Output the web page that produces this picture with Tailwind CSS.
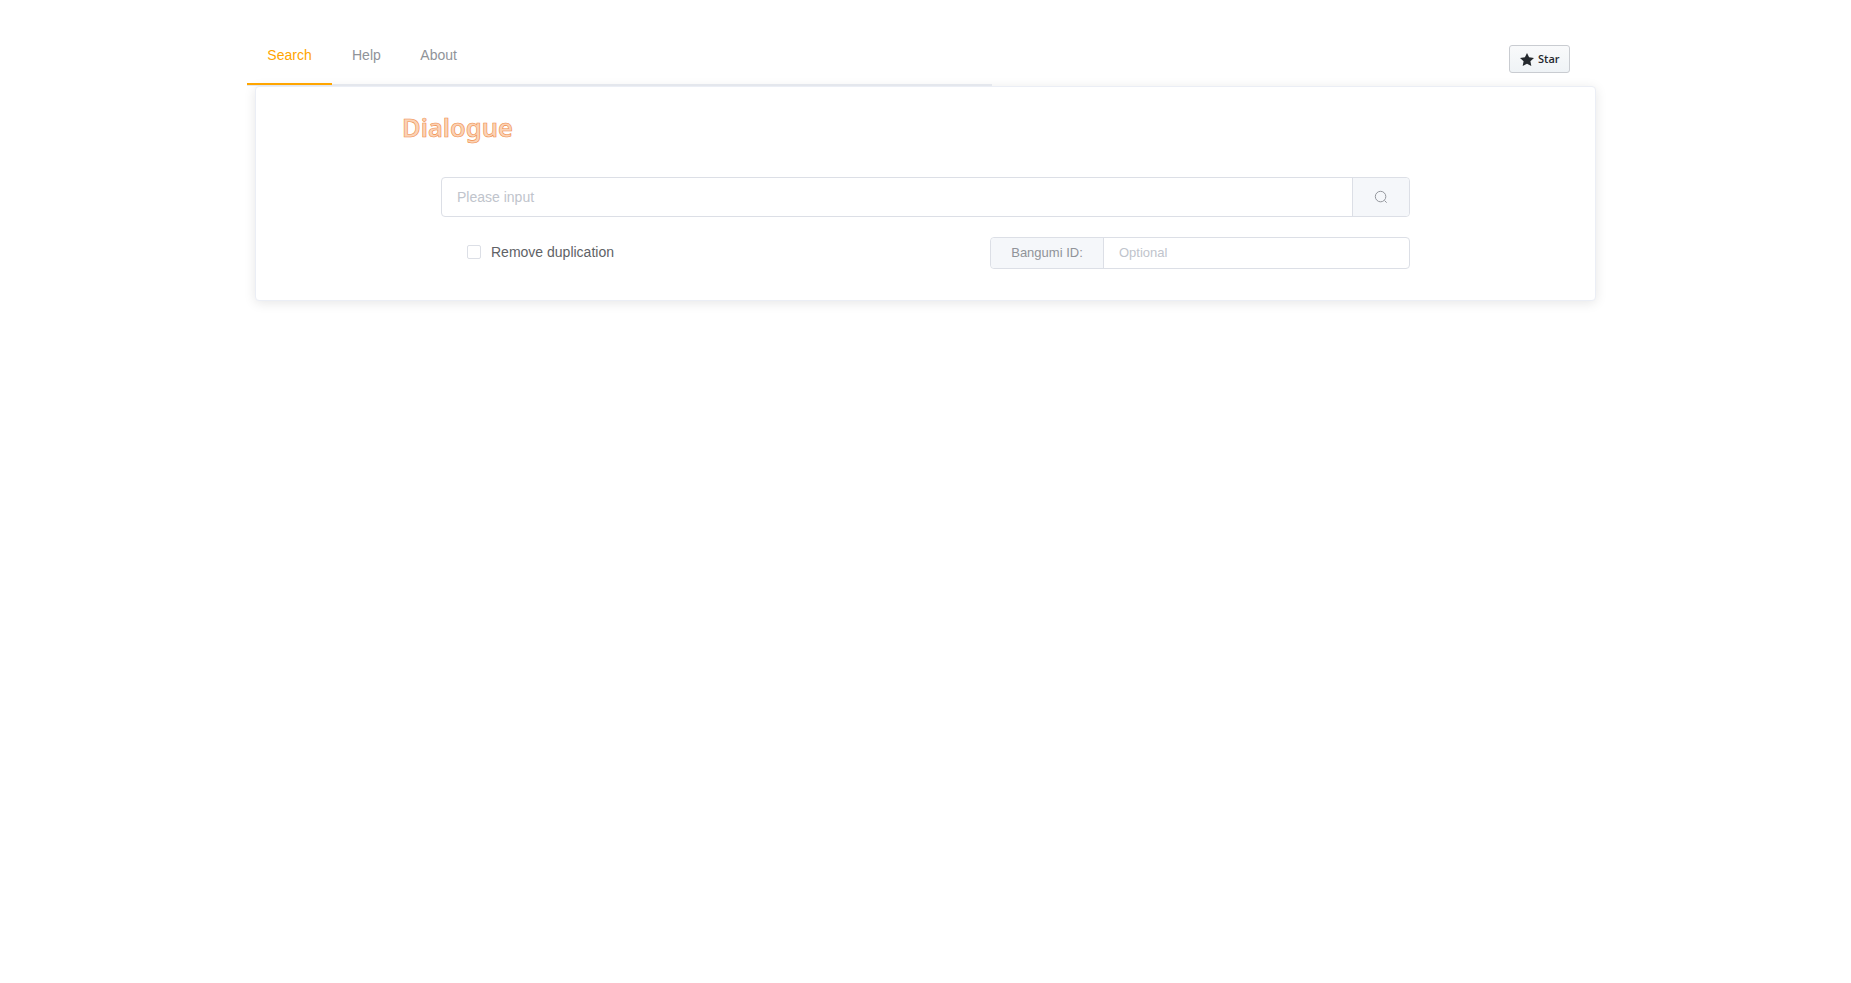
<!DOCTYPE html>
<html>
<head>
<meta charset="utf-8">
<title>Dialogue</title>
<script src="https://cdn.jsdelivr.net/npm/@tailwindcss/browser@4"></script>
</head>
<body class="bg-white font-['Liberation_Sans',Arial,sans-serif]">
<div class="min-h-[983px] pt-[25px] pl-[247px] w-[1610px]">
  <header class="flex justify-between h-[60px] w-[1323px]">
    <nav class="flex w-[745px] h-[61px] border-b-2 border-[#e4e7ed] text-sm leading-[60px] text-[#909399]">
      <a class="block w-[85px] h-[60px] text-center text-[#ffa500] border-b-2 border-[#ffa500]">Search</a>
      <a class="block px-5">Help</a>
      <a class="block pl-[19.5px] pr-5">About</a>
    </nav>
    <button class="mt-5 w-[61px] h-[28px] flex items-center justify-start pl-[10px] pt-[1px] gap-1 rounded-[3px] border border-[#c9ccd1] bg-[linear-gradient(#f9fafb,#eff3f6)] text-[11px] font-semibold text-[#24292e] font-['Open_Sans',sans-serif]">
      <svg viewBox="0 0 14 16" class="w-[14px] h-4" fill="#24292e"><path fill-rule="evenodd" d="M14 6l-4.9-.64L7 1 4.9 5.36 0 6l3.6 3.26L2.67 14 7 11.67 11.33 14l-.93-4.74L14 6z"/></svg>
      Star
    </button>
  </header>
  <main class="ml-2 mt-[1px] w-[1341px] h-[215px] rounded bg-white border border-[#ebeef5] shadow-[0_2px_12px_0_rgba(0,0,0,0.1)]">
    <h1 class="ml-[146px] pt-[22px] text-[25.5px] leading-[36px] font-semibold text-[#fbd3b6] [-webkit-text-stroke:0.6px_#f08c48] font-['Noto_Sans',sans-serif]">Dialogue</h1>
    <div class="ml-[185px] mt-[32px] w-[969px]">
      <div class="flex h-10 rounded border border-[#dcdfe6] text-sm">
        <div class="flex-1 flex items-center px-[15px] text-[#c0c4cc]">Please input</div>
        <div class="w-[57px] flex items-center justify-center border-l border-[#dcdfe6] bg-[#f5f7fa] rounded-r">
          <svg viewBox="0 0 16 16" class="w-[14px] h-[14px]" fill="none" stroke="#909399" stroke-width="1.1"><circle cx="7.5" cy="7.5" r="6"/><path d="M12 12l2.5 2.5"/></svg>
        </div>
      </div>
      <div class="flex items-center justify-between mt-5 h-8">
        <label class="flex items-center ml-[26px] -mt-[3px] text-sm text-[#606266]">
          <span class="w-[14px] h-[14px] rounded-[2px] border border-[#dcdfe6] mr-[10px]"></span>
          Remove duplication
        </label>
        <div class="flex w-[420px] h-8 rounded border border-[#dcdfe6] text-[13px]">
          <div class="w-[113px] flex items-center justify-center border-r border-[#dcdfe6] bg-[#f5f7fa] text-[#909399] rounded-l">Bangumi ID:</div>
          <div class="flex-1 flex items-center px-[15px] text-[13px] text-[#c0c4cc]">Optional</div>
        </div>
      </div>
    </div>
  </main>
</div>
</body>
</html>
